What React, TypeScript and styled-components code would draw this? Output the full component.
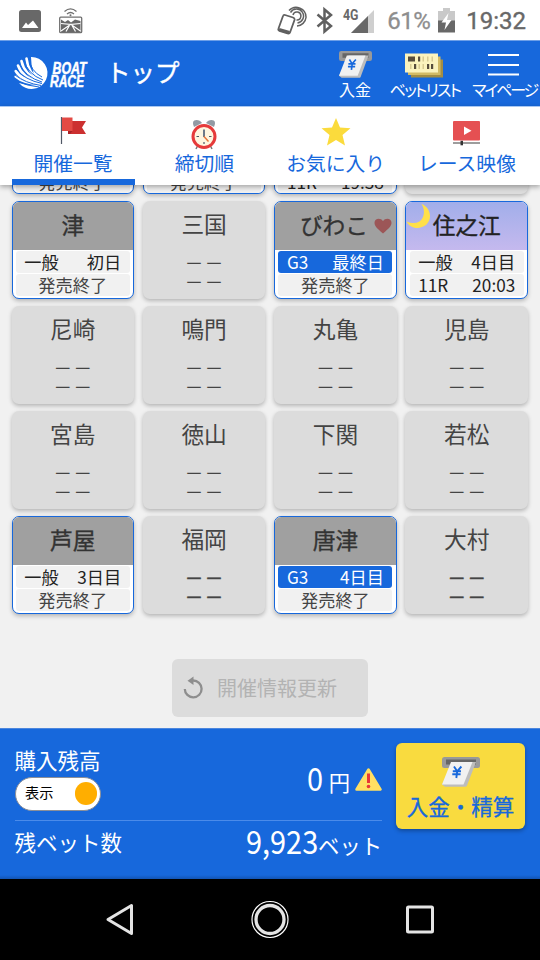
import React from "react";
import styled, { createGlobalStyle } from "styled-components";

const BLUE = "#1768dc";

const Global = createGlobalStyle`
  * { box-sizing: border-box; }
  body { margin: 0; font-family: "Noto Sans CJK JP", sans-serif; }
`;

const Screen = styled.div`
  width: 540px;
  height: 960px;
  display: flex;
  flex-direction: column;
  background: #f1f1f1;
  overflow: hidden;
`;

/* ---------- status bar ---------- */
const StatusBar = styled.div`
  height: 40px;
  flex: none;
  display: flex;
  align-items: center;
  background: #fff;
  padding: 2px 14px 0 19px;
  font-family: Roboto, sans-serif;
  font-weight: 400;
`;
const StatusGroup = styled.div<{ $end?: boolean }>`
  display: flex;
  align-items: center;
  margin-left: ${(p) => (p.$end ? "auto" : 0)};
`;
const Percent = styled.span`
  width: 51px;
  font-size: 24px;
  line-height: 38px;
  letter-spacing: -0.5px;
  color: #8e8e8e;
  -webkit-text-stroke: 0.3px #8e8e8e;
`;
const Clock = styled.span`
  font-size: 24px;
  line-height: 38px;
  color: #686868;
  -webkit-text-stroke: 0.4px #686868;
`;

/* ---------- header ---------- */
const Header = styled.header`
  height: 66px;
  flex: none;
  display: flex;
  background: ${BLUE};
  border-top: 1px solid #6d9fe8;
  color: #fff;
  padding-left: 14px;
`;
const Logo = styled.svg`
  margin-top: 15px;
  flex: none;
  overflow: visible;
`;
const Title = styled.h1`
  margin: 0 0 0 15px;
  width: 213px;
  flex: none;
  font-size: 24.5px;
  font-weight: 400;
  line-height: 61px;
  -webkit-text-stroke: 0.4px #fff;
`;
const HeaderButton = styled.div<{ $w: number }>`
  width: ${(p) => p.$w}px;
  flex: none;
  display: flex;
  flex-direction: column;
  align-items: center;
  padding-top: 10px;
`;
const HeaderLabel = styled.span<{ $squeeze?: number }>`
  font-size: 16px;
  line-height: 24px;
  margin-top: -1px;
  white-space: nowrap;
  font-feature-settings: ${(p) => (p.$squeeze ? '"palt"' : "normal")};
  letter-spacing: -${(p) => p.$squeeze ?? 0}px;
  margin-right: -${(p) => p.$squeeze ?? 0}px;
`;

/* ---------- tabs ---------- */
const Tabs = styled.nav`
  height: 79px;
  flex: none;
  display: grid;
  grid-template-columns: repeat(4, 123px);
  column-gap: 8.33px;
  padding-left: 11.5px;
  background: #fff;
  box-shadow: 0 2px 5px rgba(0, 0, 0, 0.32);
  border-top: 1px solid #a9c8f3;
  z-index: 1;
`;
const Tab = styled.div<{ $active?: boolean }>`
  display: flex;
  flex-direction: column;
  align-items: center;
  padding-top: 7px;
  color: ${BLUE};
  font-size: 19.8px;
  line-height: 30px;
  white-space: nowrap;
  border-bottom: 6px solid ${(p) => (p.$active ? BLUE : "transparent")};
`;
const TabIcon = styled.svg`
  flex: none;
  margin-bottom: -2px;
`;

/* ---------- venue grid ---------- */
const Content = styled.main`
  flex: 1;
  min-height: 0;
  overflow: hidden;
  display: flex;
  flex-direction: column;
  align-items: center;
`;
const VenueGrid = styled.div`
  align-self: flex-start;
  margin-top: -16px;
  padding-left: 11.5px;
  display: grid;
  grid-template-columns: repeat(4, 122.5px);
  grid-template-rows: 25px;
  grid-auto-rows: 98px;
  gap: 7px 8.83px;
`;
const Card = styled.div<{ $open: boolean }>`
  position: relative;
  border-radius: 7px;
  overflow: hidden;
  display: flex;
  flex-direction: column;
  align-items: center;
  box-shadow: 0 2px 4px rgba(0, 0, 0, 0.25);
  background: ${(p) => (p.$open ? "#fff" : "#dcdcdc")};
  border: ${(p) => (p.$open ? `1.5px solid ${BLUE}` : "0")};
`;
const CardHead = styled.div<{ $night?: boolean }>`
  align-self: stretch;
  height: 48px;
  flex: none;
  text-align: center;
  font-size: 22.7px;
  line-height: 46px;
  color: ${(p) => (p.$night ? "#222" : "#333")};
  -webkit-text-stroke: 0.35px ${(p) => (p.$night ? "#222" : "#333")};
  background: ${(p) => (p.$night ? "linear-gradient(#a1aeea, #c5b9ee)" : "#a0a0a0")};
`;
const CardName = styled.span<{ $shifted?: boolean }>`
  margin-right: ${(p) => (p.$shifted ? 3 : 0)}px;
`;
const CardRow = styled.div<{ $graded?: boolean; $muted?: boolean; $split?: boolean }>`
  width: 114px;
  height: 22px;
  flex: none;
  margin-top: 1px;
  padding: 0 8.5px;
  border-radius: 3px;
  display: flex;
  justify-content: ${(p) => (p.$split ? "space-between" : "center")};
  font-size: 17.2px;
  line-height: 21.5px;
  white-space: nowrap;
  background: ${(p) => (p.$graded ? BLUE : "#f1f1f1")};
  color: ${(p) => (p.$graded ? "#fff" : p.$muted ? "#444" : "#222")};
`;
const EmptyName = styled.div`
  margin-top: 5.5px;
  font-size: 22.7px;
  line-height: 34px;
  color: #444;
`;
const Dashes = styled.div<{ $first?: boolean; $bold?: boolean }>`
  margin-top: ${(p) => (p.$first ? 12.5 : 0)}px;
  font-size: 18.5px;
  line-height: 18.5px;
  letter-spacing: 1.5px;
  margin-right: -1.5px;
  color: #444;
  -webkit-text-stroke: ${(p) => (p.$bold ? 0.4 : 0.15)}px #444;
`;
const Heart = styled.svg`
  position: absolute;
  right: 4px;
  top: 16px;
`;
const Moon = styled.svg`
  position: absolute;
  left: 0;
  top: 1px;
`;
const RefreshButton = styled.div`
  flex: none;
  margin-top: 45px;
  width: 196px;
  height: 58px;
  border-radius: 6px;
  background: #dcdcdc;
  display: flex;
  align-items: center;
  padding-left: 11px;
  gap: 13px;
  font-size: 20px;
  line-height: 30px;
  color: #b3b3b3;
`;
const RefreshLabel = styled.span`
  margin-top: -1px;
`;

/* ---------- footer ---------- */
const Footer = styled.footer`
  height: 151px;
  flex: none;
  display: flex;
  gap: 14px;
  padding: 14px 15px 0;
  color: #fff;
  background: linear-gradient(${BLUE} 146px, #1254b4);
  border-top: 1px solid #4c86dd;
`;
const Account = styled.div`
  width: 367px;
  flex: none;
  font-size: 21.5px;
`;
const Balance = styled.div`
  height: 78px;
  border-bottom: 1.5px solid #4b8bea;
  display: flex;
  justify-content: space-between;
`;
const BalanceLabel = styled.div`
  line-height: 33px;
  margin-left: -0.5px;
`;
const Toggle = styled.div`
  width: 86px;
  height: 34px;
  margin-top: 1px;
  border: 1.5px solid #8b8f98;
  border-radius: 17px;
  background: #fff;
  color: #000;
  display: flex;
  align-items: center;
  justify-content: space-between;
  padding: 0 3px 4px 9px;
  font-size: 14.2px;
  line-height: 24px;
`;
const Knob = styled.span`
  width: 22.5px;
  height: 22.5px;
  border-radius: 50%;
  background: #ffae00;
  margin-top: 3px;
`;
const Amount = styled.div`
  display: flex;
  align-items: baseline;
  line-height: 40px;
  white-space: nowrap;
`;
const BigNumber = styled.span`
  font-size: 32.5px;
  display: inline-block;
  transform: scaleX(0.89);
  transform-origin: right;
`;
const Unit = styled.span<{ $gap?: number }>`
  font-size: 21.3px;
  margin-left: ${(p) => p.$gap ?? 0}px;
  margin-top: -1px;
`;
const BalanceAmount = styled(Amount)`
  margin-top: 14px;
`;
const Warning = styled.svg`
  margin-left: 5px;
  align-self: flex-start;
  margin-top: 11px;
`;
const Bets = styled.div`
  display: flex;
  justify-content: space-between;
  line-height: 41px;
`;
const BetsLabel = styled.span`
  margin-left: -0.5px;
`;
const BetsAmount = styled(Amount)`
  margin-top: -1.5px;
`;
const PayButton = styled.div`
  width: 129px;
  height: 86px;
  flex: none;
  border-radius: 6px;
  background: #f9db3f;
  box-shadow: 0 2px 4px rgba(0, 0, 0, 0.3);
  color: ${BLUE};
  display: flex;
  flex-direction: column;
  align-items: center;
  padding-top: 14px;
  font-size: 21.5px;
  line-height: 37px;
  white-space: nowrap;
  -webkit-text-stroke: 0.3px ${BLUE};
`;

/* ---------- system navigation ---------- */
const SystemNav = styled.div`
  height: 81px;
  flex: none;
  background: #000;
  display: flex;
  align-items: center;
  justify-content: space-between;
  padding: 0 100px;
`;

function CashIcon({ w, h }: { w: number; h: number }) {
  return (
    <svg width={w} height={h} viewBox="0 0 38 30" preserveAspectRatio="none">
      <rect x="0" y="0" width="38" height="11" rx="2.5" fill="#999" />
      <rect x="4" y="2.5" width="30" height="5" fill="#666" />
      <path d="M11 5H34L25 28.5Q24.5 29.8 23 29.8H3L0 27.5Z" fill="#bdbdbd" />
      <path d="M9 5H30.5L21.5 27.5H0Z" fill="#f1f1f1" />
      <path d="M12 9.5L15.2 14.3L19.4 9.5M10.8 14.3H19M10.3 17.3H18.6M15.2 14.3L14.3 21" fill="none" stroke={BLUE} strokeWidth="1.9" />
    </svg>
  );
}

function BetListIcon() {
  return (
    <svg width="39" height="27" viewBox="0 -2.5 39 27">
      <rect x="6" y="6" width="32" height="18" fill="#a28d44" />
      <rect x="3" y="3" width="32.5" height="18.5" fill="#d2bb66" />
      <rect x="0" y="0" width="33" height="19" fill="#fbf3bd" />
      <path d="M3 3h7v5H3zM13 3h2.2v5H13zM9 10.500h2.200v5H9zM22 10.500h2.200v5H22zM26 10.500h2.200v5H26z" fill="#574d3c" />
      <path d="M17.500 3h1.500v5h-1.500zM22 3h1.500v5H22zM26.500 3H28v5h-1.500zM5 10.500h1.500v5H5zM13.500 10.500H15v5h-1.500zM17.500 10.500H19v5h-1.500z" fill="#d8cb92" />
    </svg>
  );
}

function BoatRaceLogo() {
  return (
    <Logo width="77" height="36" viewBox="0 0 77 36">
      <path d="M17 1A16 16 0 1 1 5 27Q17 31 27 28Q17 19 17 1Z" fill="#fff" />
      <g fill="none" stroke="#fff" strokeWidth="2.600" strokeLinecap="round">
        <path d="M12.500 2.500Q14 17 26 25" />
        <path d="M7.500 5Q10 18 26 26" />
        <path d="M4 9.500Q8 21 25 27" />
        <path d="M1.700 15Q7 24 25 27.500" />
        <path d="M1.700 20.500Q9 27 25 28" />
      </g>
      <g fill="none" stroke={BLUE} strokeWidth="1">
        <path d="M15 1.500Q16 15 28 21M10 3.500Q13 18 29 24M5 7Q11 21 28 26M2 13Q11 24 28 27.500M1 19Q11 27 27 29.500M3 25Q13 30 25 31" />
      </g>
      <g fill="#fff" fontFamily="Liberation Sans, sans-serif" fontWeight="700" fontStyle="italic" fontSize="16" stroke="#fff" strokeWidth=".5">
        <text x="38.500" y="17.500" textLength="34" lengthAdjust="spacingAndGlyphs">BOAT</text>
        <text x="36" y="30.500" textLength="34" lengthAdjust="spacingAndGlyphs">RACE</text>
      </g>
    </Logo>
  );
}

type Venue = {
  name: string;
  grade?: string;
  day?: string;
  race?: string;
  time?: string;
  night?: boolean;
  favorite?: boolean;
  strong?: boolean;
};

const venues: Venue[] = [
  { name: "津", grade: "一般", day: "初日" },
  { name: "三国" },
  { name: "びわこ", grade: "G3", day: "最終日", favorite: true },
  { name: "住之江", grade: "一般", day: "4日目", race: "11R", time: "20:03", night: true },
  { name: "尼崎" },
  { name: "鳴門" },
  { name: "丸亀" },
  { name: "児島" },
  { name: "宮島" },
  { name: "徳山" },
  { name: "下関" },
  { name: "若松" },
  { name: "芦屋", grade: "一般", day: "3日目" },
  { name: "福岡", strong: true },
  { name: "唐津", grade: "G3", day: "4日目" },
  { name: "大村", strong: true },
];

function SaleRow({ race, time }: { race?: string; time?: string }) {
  return race ? (
    <CardRow $split>
      <span>{race}</span>
      <span>{time}</span>
    </CardRow>
  ) : (
    <CardRow $muted>発売終了</CardRow>
  );
}

function VenueCard({ venue: v }: { venue: Venue }) {
  if (!v.grade) {
    return (
      <Card $open={false}>
        <EmptyName>{v.name}</EmptyName>
        <Dashes $first $bold={v.strong}>－－</Dashes>
        <Dashes $bold={v.strong}>－－</Dashes>
      </Card>
    );
  }
  return (
    <Card $open>
      <CardHead $night={v.night}>
        <CardName $shifted={v.favorite}>{v.name}</CardName>
      </CardHead>
      {v.favorite && (
        <Heart width="18" height="16" viewBox="0 0 18 16">
          <path d="M9 15.500C3 10.500 .5 8 .5 4.800C.5 .3 6.500 -.8 9 3.200C11.500 -.8 17.500 .3 17.500 4.800C17.500 8 15 10.500 9 15.500Z" fill="#9c5657" />
        </Heart>
      )}
      {v.night && (
        <Moon width="25" height="26" viewBox="0 0 25 26">
          <path d="M15.500 1C24 4 27 15 20.500 21.500C14 27 4 26 .5 18.500C8 21.500 14 20 16.500 15C19 10 18 5 15.500 1Z" fill="#ffe04a" />
        </Moon>
      )}
      <CardRow $split $graded={v.grade === "G3"}>
        <span>{v.grade}</span>
        <span>{v.day}</span>
      </CardRow>
      <SaleRow race={v.race} time={v.time} />
    </Card>
  );
}

export default function App() {
  return (
    <>
      <Global />
      <Screen>
        <StatusBar>
          <StatusGroup>
            <svg width="22" height="22" viewBox="0 0 22 22">
              <rect width="22" height="22" rx="2.500" fill="#686868" />
              <path d="M3 18L7 12.500L9 15L14 10.500L19.500 18Z" fill="#fff" />
            </svg>
            <svg width="42" height="28" viewBox="0 0 42 28">
              <g fill="none" stroke="#707070" strokeWidth="1.300">
                <path d="M23.500 4.500Q29.500 -.8 35.500 4.500M26 7Q29.500 4 33 7" />
                <rect x="18.700" y="10.200" width="22" height="15.500" rx="1" />
              </g>
              <circle cx="29.500" cy="8.300" r="1" fill="#707070" />
              <path d="M20 12.500L24 15L27 13L30 15.500L34 12.500L39.500 14V25H20Z" fill="#686868" />
              <path d="M20 16.500L29.500 17.500L20 24M39.500 16.500L30 17.500L39.500 24M29 17.500L25 24.500M30.500 17.500L34.500 24.500" stroke="#fff" strokeWidth="1.200" fill="none" />
            </svg>
          </StatusGroup>
          <StatusGroup $end>
            <svg width="110" height="32" viewBox="0 0 110 32">
              <g fill="none" stroke="#606060" strokeWidth="1.800">
                <path d="M8 10L16 12.500Q18 13.200 17.500 15L13 27.500Q12.500 29 10.500 28.500L2.500 26Q.8 25.300 1.500 23.500L6 11Q6.500 9.500 8 10Z" />
                <path d="M2 24.500L12.500 27.500" strokeWidth="3" />
                <path d="M16 10A4 4 0 1 1 19.500 15M13.500 7.500A7 7 0 1 1 20.500 18M12 5.500A9.800 9.800 0 0 1 29 12.500A9.500 9.500 0 0 1 20 21" strokeWidth="1.500" />
                <path d="M40.500 9.500L54 21L47.500 26.500V4.500L54 10L40.500 21.500" strokeWidth="2.500" />
              </g>
              <path d="M97 5V28H74Z" fill="#cfcfcf" />
              <path d="M91 11V28H74Z" fill="#686868" />
              <text x="66" y="15" fontSize="15" fontWeight="700" fill="#686868" fontFamily="Roboto, sans-serif" textLength="15.500" lengthAdjust="spacingAndGlyphs">4G</text>
            </svg>
            <Percent>61%</Percent>
            <svg width="28" height="26" viewBox="0 0 28 26">
              <path d="M5 0H12V3H17V13H0V3H5Z" fill="#c9c9c9" />
              <path d="M0 12.500H17V24.500H0Z" fill="#686868" />
              <path d="M10.500 5L3.500 14.500H8L6.500 22L13.500 12H9Z" fill="#fff" />
            </svg>
            <Clock>19:32</Clock>
          </StatusGroup>
        </StatusBar>

        <Header>
          <BoatRaceLogo />
          <Title>トップ</Title>
          <HeaderButton $w={72}>
            <CashIcon w={33} h={27} />
            <HeaderLabel>入金</HeaderLabel>
          </HeaderButton>
          <HeaderButton $w={66}>
            <BetListIcon />
            <HeaderLabel $squeeze={1.75}>ベットリスト</HeaderLabel>
          </HeaderButton>
          <HeaderButton $w={93}>
            <svg width="31" height="27" viewBox="0 0 31 27">
              <path d="M0 4H31M0 14H31M0 23.500H31" stroke="#fff" strokeWidth="2" />
            </svg>
            <HeaderLabel $squeeze={2.2}>マイページ</HeaderLabel>
          </HeaderButton>
        </Header>

        <Tabs>
          <Tab $active>
            <TabIcon width="30" height="36" viewBox="0 0 30 36">
              <path d="M3.500 3V30" stroke="#505866" strokeWidth="1.200" />
              <path d="M10 7H28L24 13.500L28 20H10Z" fill="#cc3030" />
              <path d="M4 3.500H14.500V17H4Z" fill="#e34a45" />
              <path d="M10 17H14.500L12 20H10Z" fill="#a82226" />
            </TabIcon>
            開催一覧
          </Tab>
          <Tab>
            <TabIcon width="28" height="36" viewBox="0 0 28 36">
              <path d="M4 13Q1 6 6.500 6Q10 6 12 9Z M24 13Q27 6 21.500 6Q18 6 16 9Z" fill="#929aa4" />
              <path d="M8 31L6 35M20 31L22 35" stroke="#777" strokeWidth="1.500" />
              <circle cx="14" cy="22.500" r="11" fill="#fff6df" stroke="#e63b3b" strokeWidth="3" />
              <path d="M14 15.500V23" fill="none" stroke="#3c506b" strokeWidth="1.500" />
              <path d="M14 22.500L18.500 27.500" stroke="#e6773b" strokeWidth="1.500" />
              <path d="M6.500 22.500H9M19 22.500H21.500M14 28V30" stroke="#4d5664" strokeWidth="1.200" />
            </TabIcon>
            締切順
          </Tab>
          <Tab>
            <TabIcon width="30" height="36" viewBox="0 0 30 36">
              <path d="M15 4L19 13.500L29.500 14.300L21.500 21L24 31.500L15 26L6 31.500L8.500 21L.5 14.300L11 13.500Z" fill="#fbdb3c" />
            </TabIcon>
            お気に入り
          </Tab>
          <Tab>
            <TabIcon width="27" height="36" viewBox="0 0 27 36">
              <rect x="0" y="7" width="27" height="19.500" rx="1" fill="#e55052" />
              <path d="M11 12.500L18.500 16.800L11 21Z" fill="#fff" />
              <path d="M0 29H27" stroke="#8c8c8c" strokeWidth="1.700" />
              <rect x="7.500" y="26.800" width="2.500" height="4.500" fill="#333" />
            </TabIcon>
            レース映像
          </Tab>
        </Tabs>

        <Content>
          <VenueGrid>
            <Card $open><SaleRow /></Card>
            <Card $open><SaleRow /></Card>
            <Card $open><SaleRow race="11R" time="19:38" /></Card>
            <Card $open={false} />
            {venues.map((v) => (
              <VenueCard key={v.name} venue={v} />
            ))}
          </VenueGrid>
          <RefreshButton>
            <svg width="21" height="24" viewBox="0 0 21 24">
              <path d="M1.800 13A8.400 8.400 0 1 0 10 4.500" fill="none" stroke="#8e8e8e" strokeWidth="2.300" />
              <path d="M4.500 4.800L10.500 .5V9Z" fill="#8e8e8e" />
            </svg>
            <RefreshLabel>開催情報更新</RefreshLabel>
          </RefreshButton>
        </Content>

        <Footer>
          <Account>
            <Balance>
              <div>
                <BalanceLabel>購入残高</BalanceLabel>
                <Toggle>
                  表示
                  <Knob />
                </Toggle>
              </div>
              <BalanceAmount>
                <BigNumber>0</BigNumber>
                <Unit $gap={6}>円</Unit>
                <Warning width="27" height="23" viewBox="0 0 27 23">
                  <path d="M13.500 1.500L25.500 21.500H1.500Z" fill="#ffdf62" stroke="#ffdf62" strokeWidth="2.500" strokeLinejoin="round" />
                  <path d="M13.500 5.500V15" stroke="#e73737" strokeWidth="3" />
                  <circle cx="13.500" cy="18.500" r="1.800" fill="#e73737" />
                </Warning>
              </BalanceAmount>
            </Balance>
            <Bets>
              <BetsLabel>残ベット数</BetsLabel>
              <BetsAmount>
                <BigNumber>9,923</BigNumber>
                <Unit>ベット</Unit>
              </BetsAmount>
            </Bets>
          </Account>
          <PayButton>
            <CashIcon w={38} h={30} />
            入金・精算
          </PayButton>
        </Footer>

        <SystemNav>
          <svg width="40" height="40" viewBox="0 0 40 40">
            <path d="M8 19.500L31.500 5.500V33.500Z" fill="none" stroke="#e4e4e4" strokeWidth="3" strokeLinejoin="round" />
          </svg>
          <svg width="40" height="40" viewBox="0 0 40 40">
            <circle cx="20" cy="19.500" r="18" fill="none" stroke="#fff" strokeWidth="1.200" />
            <circle cx="20" cy="19.500" r="14" fill="none" stroke="#e4e4e4" strokeWidth="3.300" />
          </svg>
          <svg width="40" height="40" viewBox="0 0 40 40">
            <rect x="7.500" y="7" width="25" height="25" rx="1" fill="none" stroke="#e4e4e4" strokeWidth="3" />
          </svg>
        </SystemNav>
      </Screen>
    </>
  );
}
